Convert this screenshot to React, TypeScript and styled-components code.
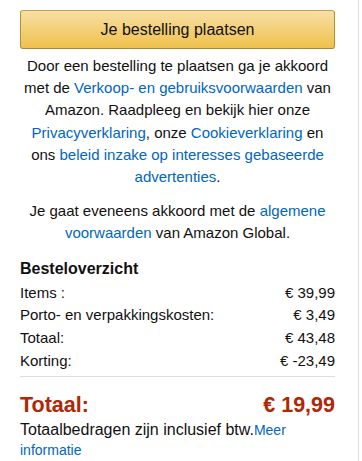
import React from "react";
import styled, { createGlobalStyle } from "styled-components";

const Global = createGlobalStyle`
  html, body { margin: 0; padding: 0; background: #fff; }
  body { font-family: Arial, "Liberation Sans", sans-serif; color: #111; }
`;

const Page = styled.div`
  width: 362px;
  height: 461px;
  display: flex;
  overflow: hidden;
`;

const Panel = styled.div`
  width: 359px;
  box-sizing: border-box;
  border-right: 1px solid #ddd;
  padding: 10px 23px 0 20px;
  display: flex;
  flex-direction: column;
`;

const PlaceButton = styled.button`
  height: 39px;
  width: 315px;
  box-sizing: border-box;
  border: 1px solid;
  border-color: #c8a248 #b49035 #a88734;
  border-radius: 3px;
  background: linear-gradient(to bottom, #f7dfa5, #f0c14b);
  font-family: inherit;
  font-size: 16px;
  color: #111;
  cursor: pointer;
  padding: 0;
`;

const Legal = styled.p<{ $gap?: number }>`
  margin: ${(p) => p.$gap ?? 6}px 0 0;
  width: 315px;
  text-align: center;
  font-size: 15px;
  line-height: 22.2px;
  color: #111;
`;

const Link = styled.a`
  color: #0066c0;
  text-decoration: none;
`;

const Summary = styled.div`
  margin-top: 13px;
  width: 315px;
  display: flex;
  flex-direction: column;
`;

const Heading = styled.h3`
  margin: 0 0 2px;
  font-size: 16px;
  font-weight: 700;
  line-height: 22px;
`;

const Row = styled.div`
  display: flex;
  justify-content: space-between;
  font-size: 15px;
  line-height: 22.7px;
  color: #111;
`;

const Divider = styled.hr`
  border: 0;
  border-top: 1px solid #ddd;
  margin: 4px 0 15px;
`;

const TotalRow = styled.div`
  display: flex;
  justify-content: space-between;
  color: #b12704;
  font-weight: 700;
  font-size: 21.5px;
  line-height: 26px;
`;

const Note = styled.div`
  margin-top: 2px;
  font-size: 16px;
  line-height: 20px;
  color: #111;
`;

const SmallLink = styled(Link)`
  font-size: 14px;
`;

const rows: [string, string][] = [
  ["Items :", "€ 39,99"],
  ["Porto- en verpakkingskosten:", "€ 3,49"],
  ["Totaal:", "€ 43,48"],
  ["Korting:", "€ -23,49"],
];

export default function App() {
  return (
    <Page>
      <Global />
      <Panel>
        <PlaceButton>Je bestelling plaatsen</PlaceButton>
        <Legal>
          Door een bestelling te plaatsen ga je akkoord met de{" "}
          <Link href="#">Verkoop- en gebruiksvoorwaarden</Link> van Amazon. Raadpleeg en bekijk hier onze{" "}
          <Link href="#">Privacyverklaring</Link>, onze <Link href="#">Cookieverklaring</Link> en ons{" "}
          <Link href="#">beleid inzake op interesses gebaseerde advertenties</Link>.
        </Legal>
        <Legal $gap={12}>
          Je gaat eveneens akkoord met de <Link href="#">algemene voorwaarden</Link> van Amazon Global.
        </Legal>
        <Summary>
          <Heading>Besteloverzicht</Heading>
          {rows.map(([l, v]) => (
            <Row key={l}>
              <span>{l}</span>
              <span>{v}</span>
            </Row>
          ))}
          <Divider />
          <TotalRow>
            <span>Totaal:</span>
            <span>€ 19,99</span>
          </TotalRow>
          <Note>
            Totaalbedragen zijn inclusief btw.<SmallLink href="#">Meer informatie</SmallLink>
          </Note>
        </Summary>
      </Panel>
    </Page>
  );
}
